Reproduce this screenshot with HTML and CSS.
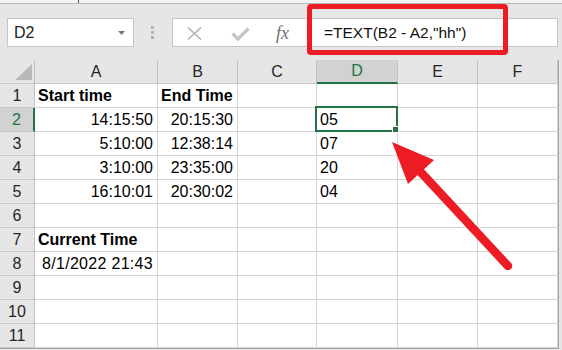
FILE: index.html
```html
<!DOCTYPE html>
<html lang="en">
<head>
  <meta charset="UTF-8">
  <title>TEXT function - hours</title>
  <link rel="stylesheet" href="styles.css">
</head>
<body>
  <!-- Ribbon edge -->
  <div class="ribbon-edge"><span class="tick"></span></div>

  <!-- Formula Bar -->
  <div class="formula-bar">
    <div class="name-box">
      <span>D2</span>
      <svg class="dropdown" width="7" height="4" viewBox="0 0 7 4"><polygon points="0,0 7,0 3.5,4"/></svg>
    </div>
    <div class="grip"><i></i><i></i><i></i></div>
    <div class="formula-box">
      <svg class="icon-cancel" width="15" height="13" viewBox="0 0 15 13"><path d="M1 0.5 L14 12.5 M14 0.5 L1 12.5"/></svg>
      <svg class="icon-enter" width="19" height="14" viewBox="0 0 19 14"><path d="M1.5 6.5 L7 12 L17.5 1.5"/></svg>
      <span class="fx">fx</span>
      <span class="formula">=TEXT(B2 - A2,"hh")</span>
    </div>
  </div>

  <!-- Sheet -->
  <div class="sheet">
    <div class="ch corner"><svg width="34" height="23" viewBox="0 0 34 23"><polygon points="15,20 32,20 32,4"/></svg></div>
    <div class="ch">A</div>
    <div class="ch">B</div>
    <div class="ch">C</div>
    <div class="ch sel">D</div>
    <div class="ch">E</div>
    <div class="ch">F</div>

    <div class="rh">1</div>
    <div class="cell bold">Start time</div>
    <div class="cell bold">End Time</div>
    <div class="cell"></div>
    <div class="cell"></div>
    <div class="cell"></div>
    <div class="cell"></div>

    <div class="rh sel">2</div>
    <div class="cell num">14:15:50</div>
    <div class="cell num">20:15:30</div>
    <div class="cell"></div>
    <div class="cell active">05<span class="handle"></span></div>
    <div class="cell"></div>
    <div class="cell"></div>

    <div class="rh">3</div>
    <div class="cell num">5:10:00</div>
    <div class="cell num">12:38:14</div>
    <div class="cell"></div>
    <div class="cell">07</div>
    <div class="cell"></div>
    <div class="cell"></div>

    <div class="rh">4</div>
    <div class="cell num">3:10:00</div>
    <div class="cell num">23:35:00</div>
    <div class="cell"></div>
    <div class="cell">20</div>
    <div class="cell"></div>
    <div class="cell"></div>

    <div class="rh">5</div>
    <div class="cell num">16:10:01</div>
    <div class="cell num">20:30:02</div>
    <div class="cell"></div>
    <div class="cell">04</div>
    <div class="cell"></div>
    <div class="cell"></div>

    <div class="rh">6</div>
    <div class="cell"></div>
    <div class="cell"></div>
    <div class="cell"></div>
    <div class="cell"></div>
    <div class="cell"></div>
    <div class="cell"></div>

    <div class="rh">7</div>
    <div class="cell bold">Current Time</div>
    <div class="cell"></div>
    <div class="cell"></div>
    <div class="cell"></div>
    <div class="cell"></div>
    <div class="cell"></div>

    <div class="rh">8</div>
    <div class="cell num date">8/1/2022 21:43</div>
    <div class="cell"></div>
    <div class="cell"></div>
    <div class="cell"></div>
    <div class="cell"></div>
    <div class="cell"></div>

    <div class="rh">9</div>
    <div class="cell"></div>
    <div class="cell"></div>
    <div class="cell"></div>
    <div class="cell"></div>
    <div class="cell"></div>
    <div class="cell"></div>

    <div class="rh">10</div>
    <div class="cell"></div>
    <div class="cell"></div>
    <div class="cell"></div>
    <div class="cell"></div>
    <div class="cell"></div>
    <div class="cell"></div>

    <div class="rh">11</div>
    <div class="cell"></div>
    <div class="cell"></div>
    <div class="cell"></div>
    <div class="cell"></div>
    <div class="cell"></div>
    <div class="cell"></div>
  </div>

  <!-- Annotations -->
  <div class="callout-box"></div>
  <svg class="callout-arrow" width="562" height="350" viewBox="0 0 562 350">
    <line x1="416" y1="167" x2="508" y2="266"/>
    <polygon points="392,142 408,184 434,160"/>
  </svg>
</body>
</html>
```

FILE: styles.css
```css
/* Reset and Base Styles */
* {
  margin: 0;
  padding: 0;
  box-sizing: border-box;
}
body {
  position: relative;
  width: 562px;
  height: 350px;
  overflow: hidden;
  background: #e6e6e6;
  font-family: "Liberation Sans", Arial, sans-serif;
  color: #000;
}

/* Ribbon edge */
.ribbon-edge {
  height: 4px;
  padding-left: 78px;
  background: #f3f3f3;
  border-bottom: 1px solid #b8b8b8;
}
.tick {
  display: block;
  width: 1px;
  height: 3px;
  background: #555;
}

/* Formula bar */
.formula-bar {
  display: flex;
  align-items: center;
  height: 29px;
  margin-top: 14px;
  padding: 0 4px 0 7px;
}
.name-box {
  display: flex;
  align-items: center;
  justify-content: space-between;
  width: 127px;
  height: 29px;
  padding: 1px 8px 0 6px;
  background: #fff;
  border: 1px solid #c6c6c6;
  font-size: 16px;
  color: #222;
}
.dropdown polygon {
  fill: #777;
}
.grip {
  display: flex;
  flex-direction: column;
  gap: 2px;
  margin-left: 17px;
}
.grip i {
  display: block;
  width: 3px;
  height: 3px;
  background: #b4b4b4;
}
.formula-box {
  flex: 1;
  display: flex;
  align-items: center;
  height: 29px;
  margin-left: 18px;
  padding: 1px 0 0 14px;
  background: #fff;
  border: 1px solid #c6c6c6;
}
.icon-cancel path {
  fill: none;
  stroke: #b3b3b3;
  stroke-width: 1.6;
}
.icon-enter {
  margin-left: 29px;
  margin-top: 2px;
}
.icon-enter path {
  fill: none;
  stroke: #c4c4c4;
  stroke-width: 3.2;
}
.fx {
  margin-left: 26px;
  font-family: "Liberation Serif", serif;
  font-style: italic;
  font-size: 18px;
  color: #6e6e6e;
}
.formula {
  margin-left: 35px;
  font-size: 15.5px;
  color: #111;
  white-space: nowrap;
}

/* Sheet grid */
.sheet {
  display: grid;
  grid-template-columns: 35px 123px 80px 79px 81px 80px 80px;
  grid-auto-rows: 24px;
  width: 559px;
  margin-top: 13px;
  border-right: 1px solid #a8a8a8;
  border-bottom: 1px solid #a8a8a8;
}
.ch,
.rh {
  background: #e6e6e6;
  border-right: 1px solid #c2c2c2;
  border-bottom: 1px solid #c8c8c8;
  text-align: center;
  font-size: 16px;
  line-height: 23px;
  color: #262626;
}
.corner svg {
  display: block;
}
.corner polygon {
  fill: #b9b9b9;
}
.ch.sel {
  background: #d2d2d2;
  color: #217346;
  line-height: 22px;
  border-bottom: 2px solid #217346;
}
.rh.sel {
  background: #d2d2d2;
  color: #217346;
  border-right: 2px solid #217346;
}
.cell {
  background: #fff;
  border-right: 1px solid #d4d4d4;
  border-bottom: 1px solid #d4d4d4;
  padding: 0 3px;
  font-size: 16px;
  line-height: 23px;
  white-space: nowrap;
}
.cell.num {
  text-align: right;
  padding-right: 4px;
}
.cell.date {
  letter-spacing: 0.3px;
}
.cell.bold {
  font-weight: bold;
}
.cell.active {
  position: relative;
}
.cell.active::after {
  content: "";
  position: absolute;
  top: -2px;
  left: -2px;
  right: -1px;
  bottom: -1px;
  border: 2px solid #217346;
}
.handle {
  position: absolute;
  right: -2px;
  bottom: -2px;
  width: 7px;
  height: 7px;
  background: #217346;
  border: 1px solid #fff;
  z-index: 2;
}

/* Annotations */
.callout-box {
  position: absolute;
  left: 307px;
  top: 4px;
  width: 201px;
  height: 51px;
  border: 5px solid #ed1c24;
  border-radius: 4px;
}
.callout-arrow {
  position: absolute;
  left: 0;
  top: 0;
  pointer-events: none;
}
.callout-arrow line {
  stroke: #ed1c24;
  stroke-width: 8.5;
  stroke-linecap: round;
}
.callout-arrow polygon {
  fill: #ed1c24;
}
```
